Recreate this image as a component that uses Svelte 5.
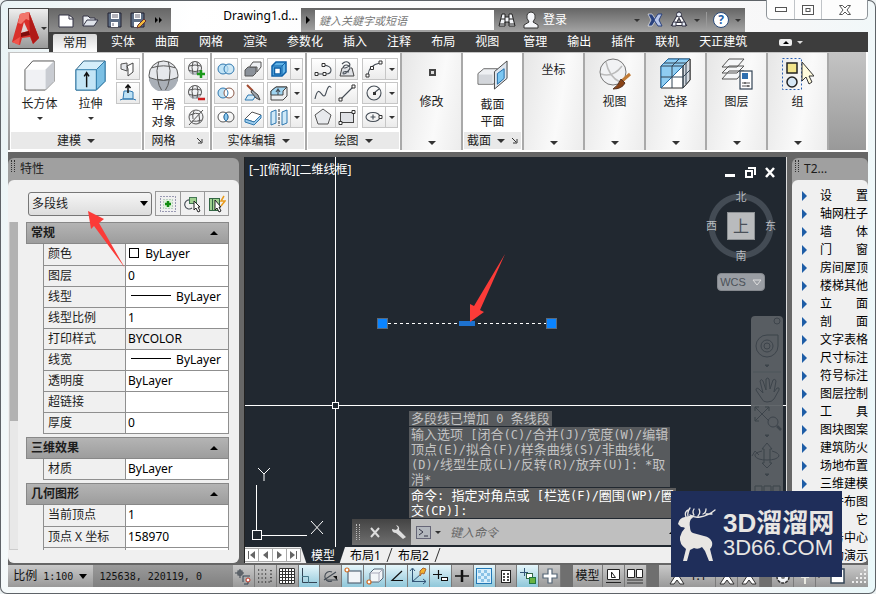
<script lang="ts">
  interface Property {
    label: string;
    value: string;
    kind?: "color" | "line" | "readonly";
  }

  interface PropertyGroup {
    title: string;
    rows: Property[];
  }

  const tabs = ["常用", "实体", "曲面", "网格", "渲染", "参数化", "插入", "注释", "布局", "视图", "管理", "输出", "插件", "联机", "天正建筑"];

  const groups: PropertyGroup[] = [
    {
      title: "常规",
      rows: [
        { label: "颜色", value: "ByLayer", kind: "color" },
        { label: "图层", value: "0" },
        { label: "线型", value: "ByLayer", kind: "line" },
        { label: "线型比例", value: "1" },
        { label: "打印样式", value: "BYCOLOR", kind: "readonly" },
        { label: "线宽", value: "ByLayer", kind: "line" },
        { label: "透明度", value: "ByLayer" },
        { label: "超链接", value: "" },
        { label: "厚度", value: "0" },
      ],
    },
    { title: "三维效果", rows: [{ label: "材质", value: "ByLayer" }] },
    {
      title: "几何图形",
      rows: [
        { label: "当前顶点", value: "1" },
        { label: "顶点 X 坐标", value: "158970" },
        { label: "", value: "" },
      ],
    },
  ];

  const archMenu = [
    "设置", "轴网柱子", "墙体", "门窗", "房间屋顶", "楼梯其他", "立面", "剖面", "文字表格", "尺寸标注", "符号标注",
    "图层控制", "工具", "图块图案", "建筑防火", "场地布置", "三维建模", "文件布图", "其它", "服务中心", "帮助演示",
  ];

  const history = [
    ["多段线已增加 0 条线段"],
    ["输入选项 [闭合(C)/合并(J)/宽度(W)/编辑", "顶点(E)/拟合(F)/样条曲线(S)/非曲线化", "(D)/线型生成(L)/反转(R)/放弃(U)]: *取", "消*"],
    ["命令: 指定对角点或 [栏选(F)/圈围(WP)/圈", "交(CP)]:"],
  ];

  const solidEdit = [
    ["union", "extrudeFace", "shell"],
    ["subtract", "sliceTool", "splitFace"],
    ["intersect", "thicken", "mirror"],
  ];

  const draw = [
    ["pline", "sketch", "arc"],
    ["spline", "line", "circle"],
    ["polygon", "rect", "ellipse"],
  ];

  const statusToggles = [
    { icon: "infer", label: "推断约束", on: false },
    { icon: "snap", label: "捕捉模式", on: false },
    { icon: "grid", label: "栅格显示", on: false },
    { icon: "ortho", label: "正交模式", on: true },
    { icon: "polar", label: "极轴追踪", on: false },
    { icon: "osnap", label: "对象捕捉", on: true },
    { icon: "osnap3d", label: "三维对象捕捉", on: true },
    { icon: "otrack", label: "对象捕捉追踪", on: true },
    { icon: "ducs", label: "动态 UCS", on: true },
    { icon: "dyn", label: "动态输入", on: true },
    { icon: "lwt", label: "线宽", on: false },
    { icon: "tpy", label: "透明度", on: true },
    { icon: "qp", label: "快捷特性", on: false },
    { icon: "cycle", label: "选择循环", on: true },
    { icon: "monitor", label: "注释监视器", on: false },
  ];

  const ink = 'fill="none" stroke="#444c55" stroke-width="1.1"';
  const blue = 'stroke="#2f78b0"';
  const meshBall = `<circle cx="8" cy="8" r="6.500" fill="#f1f2f4" stroke="#555"/><path d="M2 11q6 2 12 0-2 4-6 4t-6-4z" fill="#b9bec5"/><path d="M2 6q6-2 12 0M2 10.500q6 2 12 0M6 2q-2 5 0 12M10 2q2 5 0 12" fill="none" stroke="#555"/>`;

  // small icons share an 18 x 18 box
  const icons: Record<string, string> = {
    planar: `<path d="M2 4l6-1v8l-6-2z" fill="#e4e6ea" stroke="#555"/><path d="M8 6l6-3v9l-5 4V9z" fill="#fff" stroke="#444"/>`,
    presspull: `<path d="M5 7h6l3 1v7H4z" fill="#bfe2f5" ${blue}/><path d="M1 16l3-1h10l3 1" ${blue} fill="none"/><path d="M9 9V2M6.500 4L9 1l2.500 3" fill="none" stroke="#111" stroke-width="1.500"/>`,
    meshMore: `${meshBall}<path d="M10 14h8M14 10v8" stroke="#1b9a1b" stroke-width="2.500"/>`,
    meshLess: `${meshBall}<path d="M11 15h7" stroke="#cc1f1f" stroke-width="2.500"/>`,
    meshCrease: `<circle cx="9" cy="9" r="7" fill="#f1f2f4" stroke="#555"/><path d="M2 17L16 2M3 7q6-3 10-1M7 3q-2 4-1 8M5 13q4 1 10-1M12 7q1 4 0 8" fill="none" stroke="#555"/>`,
    union: `<circle cx="6" cy="9" r="5" fill="#bfe2f5" ${blue}/><circle cx="12" cy="9" r="5" fill="#bfe2f5" fill-opacity=".7" ${blue}/>`,
    subtract: `<circle cx="6" cy="9" r="5" fill="#bfe2f5" ${blue}/><circle cx="12" cy="9" r="5" fill="#fff" stroke="#8a5a4a"/><path d="M9 5a5 5 0 0 1 0 8" fill="none" ${blue}/>`,
    intersect: `<circle cx="6" cy="9" r="5" fill="#fff" stroke="#555"/><circle cx="12" cy="9" r="5" fill="none" stroke="#555"/><path d="M9 5a5 5 0 0 1 0 8a5 5 0 0 1 0-8" fill="#8ccaf0" ${blue}/>`,
    extrudeFace: `<path d="M1 10l3-3h8v6l-3 3H1z" fill="#8b9199" stroke="#555"/><path d="M6 6l3-4h8v5l-4 5V7H6z" fill="#eef0f3" stroke="#555"/>`,
    sliceTool: `<path d="M4 11h8l-3 5H1z" fill="#cfe9f8" ${blue}/><path d="M3 1l6 6" stroke="#a0492f" stroke-width="2"/><path d="M8 6l6 5 2 5-4-2-5-6z" fill="#9aa3ac" stroke="#444"/>`,
    thicken: `<path d="M1 11l7-7 9 3-7 7z" fill="#fff" stroke="#555"/><path d="M1 11v3l9 3 7-7V7l-7 7z" fill="#9dcbea" ${blue}/>`,
    shell: `<path d="M2 6l4-4h10v10l-4 4H2z" fill="#5fb2e6" stroke="#0d5fa6" stroke-width="1.500"/><rect x="4.500" y="8" width="6" height="6" fill="#fff" stroke="#0d5fa6" stroke-width="1.500"/><path d="M2 6h10v10M12 6l4-4" fill="none" stroke="#0d5fa6"/>`,
    splitFace: `<path d="M1 7l5-4h11v9l-4 4H1z" fill="#eceef1" stroke="#444"/><path d="M1 7l5-4h11l-4 4v4H1z" fill="#9fd4f1" stroke="#444"/><path d="M8 11V6M6 8l2-3 2 3" ${ink}/>`,
    mirror: `<path d="M1 4l5-2v13l-5 2zM12 4l5-2v13l-5 2z" fill="#cfe9f8" ${blue}/><path d="M9 1v17" stroke="#333" stroke-dasharray="3 1"/>`,
    pline: `<path d="M2 14h10q5 0 5-4t-7-5" ${ink}/><path d="M1 12.500h3v3H1zM9 12.500h3v3H9zM8 3.500h3v3H8z" fill="#fff" stroke="#333"/>`,
    sketch: `<path d="M5 8H4L2 16h14L14 8h-1" fill="#dfe1e5" stroke="#444"/><path d="M4 4q4-4 7-1t-4 5q-3 0-1-2t5 0-3 7q-3 2-3 0t6-1" ${ink}/>`,
    arc: `<path d="M3 15Q4 5 15 3" ${ink}/><path d="M1 14h3v3H1zM5.500 6.500h3v3h-3zM14 1h3v3h-3z" fill="#fff" stroke="#333"/>`,
    spline: `<path d="M1 15C5-4 9 20 12 9S17 4 17 3" ${ink}/>`,
    line: `<path d="M3 15L15 3" ${ink}/><path d="M1 14h3v3H1zM14 1h3v3h-3z" fill="#fff" stroke="#333"/>`,
    circle: `<circle cx="9" cy="9" r="7" ${ink}/><path d="M9 9l5-4" ${ink}/><path d="M8 8h3v3H8z" fill="#333"/>`,
    polygon: `<path d="M9 1l8 6-3 9H4L1 7z" fill="#e8eaed" stroke="#555"/>`,
    rect: `<rect x="2.500" y="4.500" width="13" height="10" fill="#dfe1e5" stroke="#444"/><path d="M1 13.500h3v3H1zM14 2.500h3v3h-3z" fill="#fff" stroke="#333"/>`,
    ellipse: `<ellipse cx="8" cy="9" rx="7" ry="4.500" ${ink}/><path d="M5.500 9h5M8 6.500v5" ${ink}/><path d="M14 7.500h3v3h-3z" fill="#fff" stroke="#333"/>`,
    newFile: `<path d="M2 4h10l4 3v9H2z" fill="#fff" stroke="#334"/><path d="M12 4v4h4" fill="none" stroke="#334"/>`,
    open: `<path d="M2 15V5h5l2 2h5v3" fill="#eceff3" stroke="#334"/><path d="M2 15l4-6h11l-4 6z" fill="#dfe3ea" stroke="#334"/>`,
    save: `<path d="M3 2h13v14H3z" fill="#5d6d84" stroke="#223"/><path d="M6 2h8v6H6zM6 11h7v5H6z" fill="#fff"/><path d="M7 4h6M7 6h6M8 12v3" stroke="#667"/>`,
    saveAs: `<path d="M2 2h13v14H2z" fill="#5d6d84" stroke="#223"/><path d="M5 2h7v6H5zM5 11h6v5H5z" fill="#fff"/><path d="M6 4h5M6 6h5" stroke="#667"/><path d="M8 17l1-3 6-6 2 2-6 6z" fill="#f2b93b" stroke="#633"/>`,
    binoculars: `<path d="M4 3h3v3h4V3h3l3 12h-6v-4H7v4H1z" fill="#f3f5f8" stroke="#222"/><path d="M3 8h4M11 8h4M7 6v6M11 6v6M1 13h6M11 13h6" stroke="#222"/>`,
    user: `<path d="M7 11Q4 7 5 4q1-3 4-3t4 3q1 3-2 7l5 3v3H2v-3z" fill="#f5f7fa" stroke="#333"/>`,
    exchange: `<path d="M2 3h4l4 6-4 6H2l3-6z" fill="#29417e" stroke="#fff" stroke-width=".6"/><path d="M16 3h-4L8 9l4 6h4l-3-6z" fill="#b9c7ea" stroke="#29417e"/>`,
    a360: `<path d="M9 4l5 9H4z" fill="none" stroke="#334" stroke-width="4"/><path d="M9 4l5 9H4z" fill="none" stroke="#fff" stroke-width="2"/><path d="M9 1a2 2 0 0 1 0 5a2 2 0 0 1 0-5M3 11h3v4H2zM12 11h3l1 4h-4z" fill="#e8eef8" stroke="#334"/>`,
    quickSelect: `<path d="M1.500 1.500h15v15h-15z" fill="none" stroke="#447" stroke-dasharray="1 2"/><path d="M4.500 4.500h9v9h-9z" fill="#dff3dd" stroke="#8a9" stroke-dasharray="1 2"/><path d="M6 9h6M9 6v6" stroke="#118c11" stroke-width="2.500"/>`,
    selectObj: `<path d="M6 5a4.500 4.500 0 1 0 2 8" ${ink}/><rect x="5.500" y="2.500" width="7" height="6" fill="#9fd08f" stroke="#475"/><path d="M10 6v9l2-2 2 4 2-1-2-4h2z" fill="#fff" stroke="#222"/>`,
    toggleAdd: `<rect x="1.500" y="3.500" width="10" height="12" fill="#9fd08f" stroke="#364"/><path d="M4.500 3v13" stroke="#364"/><path d="M7 5v10l2-2 2 4 2-1-2-4h2z" fill="#fff" stroke="#222"/><path d="M16 1l-3 5h4l-4 5" fill="none" stroke="#e89b1c" stroke-width="1.500"/>`,
    infer: `<path d="M1 6h9M6 2v9" ${ink}/><rect x="4" y="4" width="4" height="4" ${ink}/><path d="M9 15V9h7M14 13v4h-4" fill="none" stroke="#345"/><circle cx="14" cy="13" r="2" fill="#fff" stroke="#b32"/>`,
    snap: `<path d="M2 3h10M2 7h10M2 11h10M2 15h13M15 3v12" fill="none" stroke="#111" stroke-width="1.200" stroke-dasharray="1.200 2.300"/>`,
    grid: `<path d="M1 1h16v16H1z" fill="#fff"/><path d="M1.500 1.500h15v15h-15zM4.500 1v16M7.500 1v16M10.500 1v16M13.500 1v16M1 4.500h16M1 7.500h16M1 10.500h16M1 13.500h16" fill="none" stroke="#333"/>`,
    ortho: `<path d="M2.500 1v14.500H17" fill="none" stroke="#345"/><path d="M2 9.500h6.500V16" fill="none" stroke="#478"/>`,
    polar: `<path d="M2 13L14 5M4 13h12" ${ink}/><path d="M10 14a5 5 0 1 1 0-9" ${ink}/><path d="M11 9h4v4z" fill="#111"/>`,
    osnap: `<rect x="4" y="4" width="13" height="12" fill="#f2f5f8" stroke="#567" stroke-width="1.200"/><circle cx="3" cy="3" r="2" fill="#fff" stroke="#d2691e" stroke-width="1.200"/>`,
    osnap3d: `<path d="M4 6l4-4h9v9l-4 4H4z" fill="#f2f5f8" stroke="#567"/><path d="M4 6h9l4-4M13 6v9" fill="none" stroke="#aab"/><circle cx="3" cy="15" r="2" fill="#fff" stroke="#d2691e" stroke-width="1.200"/>`,
    otrack: `<path d="M14 4L4 13.500h11" fill="none" stroke="#111" stroke-width="1.200"/>`,
    ducs: `<path d="M3.500 2v12.500H17M3 15L12 7" fill="none" stroke="#357"/><path d="M1 4l2.500-3L6 4M14 12l3 2.500-3 2.500" fill="none" stroke="#357"/><path d="M11 4l3-3 3 1-2 5-2-1-2 3z" fill="#f4b22c" stroke="#a63"/>`,
    dyn: `<path d="M2 7.500h9M7.500 3v9" stroke="#111" stroke-width="1.200"/><rect x="10.500" y="10.500" width="6" height="3" fill="#fff" stroke="#111"/>`,
    lwt: `<path d="M2 9h14" stroke="#111" stroke-width="1.500"/><path d="M9 3v12" stroke="#111" stroke-width="2.500"/>`,
    tpy: `<rect x="1.500" y="1.500" width="15" height="15" fill="#d9effb" stroke="#2277b5"/><path d="M3 4.500h12M3 10.500h12" stroke="#8bc3e6" stroke-width="3" stroke-dasharray="3 3"/><path d="M6 7.500h9M6 13.500h9" stroke="#8bc3e6" stroke-width="3" stroke-dasharray="3 3"/>`,
    qp: `<rect x="4.500" y="3.500" width="9" height="12" fill="#fff" stroke="#222"/><path d="M6 7h2M10 7h2M6 10h2M10 10h2M6 13h2M10 13h2" stroke="#111" stroke-width="1.500"/>`,
    cycle: `<path d="M1 5.500h8M5.500 1v8" stroke="#357"/><rect x="7.500" y="6.500" width="6" height="5" fill="#fff" stroke="#364"/><rect x="10.500" y="10.500" width="6" height="6" fill="#69b341" stroke="#274"/>`,
    monitor: `<path d="M7 2h4v5h5v4h-5v5H7v-5H2V7h5z" fill="#fff" stroke="#567" stroke-width="1.200"/>`,
    layoutA: `<path d="M3.500 2.500h12v10h-12z" fill="#fff" stroke="#222"/><path d="M7.500 5v5.500h4z" fill="none" stroke="#222"/><path d="M2 15.500h15" stroke="#222"/>`,
    layoutB: `<path d="M1.500 2.500h7v8h-7zM10.500 2.500h6v8h-6z" fill="#fff" stroke="#222"/><path d="M1 13h16M1 16h16" stroke="#333"/>`,
    scaleA: `<path d="M2 17L9 6l7 11h-4l-3-4-3 4z" fill="#fff" stroke="#333"/>`,
    gear: `<circle cx="9" cy="10" r="6" fill="#f2f4f7" stroke="#333" stroke-width="1.500" stroke-dasharray="3 1"/><circle cx="9" cy="10" r="2" fill="#777"/>`,
    lock: `<path d="M6 2h6v8H6zM9 10v7" fill="#fff" stroke="#e8e8e0" stroke-width="2"/>`,
    clean: `<path d="M3 2h13v14H3z" fill="#fff" stroke="#345" stroke-width="1.500"/>`,
  };

  // half-width runs get the narrow monospace so that two latin cells fill one wide cell
  function runs(text: string) {
    return (text.match(/[\x00-\x7f]+|[^\x00-\x7f]+/g) ?? []).map((part) => ({
      part,
      latin: part.charCodeAt(0) < 128,
    }));
  }

  let activeTab = $state("常用");
  let selection = $state("多段线");
</script>

{#snippet icon(name: string)}
  <svg class="icon" width="18" height="18" viewBox="0 0 18 18" aria-hidden="true">{@html icons[name]}</svg>
{/snippet}

{#snippet caret()}
  <span class="caret"></span>
{/snippet}

{#snippet mixed(text: string)}
  <span class="mixed">{#each runs(text) as run}<span class:latin={run.latin}>{run.part}</span>{/each}</span>
{/snippet}

<div class="window">
  <header class="top">
    <button class="app-button" aria-label="应用程序菜单">
      <svg width="30" height="36" viewBox="0 0 30 36" aria-hidden="true">
        <path d="M9 3l9-2 10 26-6 6-3-7-8 1-2 7-8-3z" fill="#d9302b" />
        <path d="M9 3l9-2 4 10-7-3-5 5-3-1z" fill="#f2766c" />
        <path d="M18 1l10 26-6 6-3-9z" fill="#b01a18" />
        <path d="M13 11l4 9-7 2z" fill="#ded5d4" />
        <path d="M10 22l8-2 1 4-9 2z" fill="#7e0f0e" />
        <path d="M1 31l8-5-1 8z" fill="#f0554c" />
      </svg>
      {@render caret()}
    </button>

    <div class="title-row">
      <div class="quick-bar">
        {#each [["newFile", "新建"], ["open", "打开"], ["save", "保存"], ["saveAs", "另存为"]] as [name, label]}
          <button class="bare" aria-label={label}>{@render icon(name)}</button>
        {/each}
        <svg class="more" width="8" height="8" viewBox="0 0 8 8" aria-hidden="true"><path d="M0 1l3 3-3 3zM4 1l3 3-3 3z" /></svg>
      </div>
      <h1>Drawing1.d...</h1>
      <div class="info-bar">
        <button class="search-toggle" aria-label="展开搜索"><span class="right-caret"></span></button>
        <input class="search" type="text" placeholder="鍵入关鍵字或短语" aria-label="搜索" />
        <button class="bare find" aria-label="查找">{@render icon("binoculars")}</button>
        <button class="bare login">{@render icon("user")}登录</button>
        <span class="info-tools">
          {@render caret()}
          <button class="bare" aria-label="Exchange">{@render icon("exchange")}</button>
          <button class="bare" aria-label="Autodesk 360">{@render icon("a360")}</button>
          {@render caret()}
          <span class="rule"></span>
          <button class="help" aria-label="帮助">?</button>
          {@render caret()}
        </span>
      </div>
      <div class="window-buttons">
        <button aria-label="最小化"><svg width="12" height="6" viewBox="0 0 12 6"><rect x=".5" y=".5" width="11" height="4" fill="#fff" stroke="#555" /></svg></button>
        <button aria-label="还原"><svg width="12" height="10" viewBox="0 0 12 10"><rect x=".5" y=".5" width="11" height="9" fill="#fff" stroke="#555" /><rect x="4" y="3.500" width="4" height="3" fill="none" stroke="#555" /></svg></button>
        <button class="close" aria-label="关闭"><svg width="12" height="10" viewBox="0 0 12 10"><path d="M.5.5h3L6 3 8.500.5h3L8 5l3.500 4.500h-3L6 7 3.500 9.500h-3L4 5z" fill="#fff" stroke="#555" /></svg></button>
      </div>
    </div>

    <nav class="tabs" aria-label="功能区">
      {#each tabs as tab}
        <button class:active={tab === activeTab} class:gap-before={tab === "管理"} onclick={() => (activeTab = tab)}>{tab}</button>
      {/each}
      <button class="collapse" aria-label="最小化功能区"><span class="pill"><span class="up-caret"></span></span>{@render caret()}</button>
    </nav>
  </header>

  <section class="ribbon" aria-label="常用">
    <div class="panel modeling">
      <div class="tools">
        <button class="big">
          <svg width="32" height="32" viewBox="0 0 32 32" aria-hidden="true">
            <path d="M1 10L9 1h22v21l-9 9H1z" fill="#fff" stroke="#555" />
            <path d="M22 10l9-9v21l-9 9z" fill="#c9ccd2" />
            <path d="M2 10h20v20H2z" fill="#f0f1f4" />
          </svg>
          长方体{@render caret()}
        </button>
        <button class="big">
          <svg width="32" height="32" viewBox="0 0 32 32" aria-hidden="true">
            <path d="M1 10L9 1h22v21l-9 9H1z" fill="#d5eefa" stroke="#2c5f80" />
            <path d="M22 10l9-9v21l-9 9z" fill="#7cc0e4" stroke="#2c7aa8" />
            <path d="M1 10h21v21H1z" fill="#c3e5f6" stroke="#2c7aa8" />
            <path d="M12 28V14M9.500 17l2.500-4 2.500 4" fill="none" stroke="#111" stroke-width="1.500" />
          </svg>
          拉伸{@render caret()}
        </button>
        <div class="stack">
          <button class="tool" aria-label="平面曲面">{@render icon("planar")}</button>
          <button class="tool" aria-label="按住并拖动">{@render icon("presspull")}</button>
        </div>
      </div>
      <div class="panel-label">建模 {@render caret()}</div>
    </div>

    <div class="panel mesh">
      <div class="tools">
        <button class="big">
          <svg width="32" height="32" viewBox="0 0 32 32" aria-hidden="true">
            <circle cx="16" cy="16" r="15" fill="#e6e8ec" stroke="#555" />
            <path d="M1 18q15 6 30 0a15 15 0 0 1-30 0z" fill="#a9afb7" />
            <path d="M11 2q-3 9-1 18 6 2 12 0 2-9-1-18M4 8q12-4 24 0M1 18q15 6 30 0M10 20q1 7 4 11M22 20q-1 7-4 11" fill="none" stroke="#555" />
          </svg>
          <span class="two-line">平滑<br />对象</span>
        </button>
        <div class="stack">
          <button class="tool" aria-label="提高平滑度">{@render icon("meshMore")}</button>
          <button class="tool" aria-label="降低平滑度">{@render icon("meshLess")}</button>
          <button class="tool" aria-label="锐化">{@render icon("meshCrease")}</button>
        </div>
      </div>
      <div class="panel-label">网格<svg class="launcher" width="7" height="7" viewBox="0 0 7 7" aria-hidden="true"><path d="M1 1l4 4M6 2v4H2" fill="none" stroke="#333" /></svg></div>
    </div>

    <div class="panel edit">
      <div class="tools rows">
        {#each solidEdit as row}
          <div class="tool-row">
            {#each row as name, i}
              <button class="tool" aria-label={name}>{@render icon(name)}</button>
              {#if i === 2}<button class="drop" aria-label="更多">{@render caret()}</button>{/if}
            {/each}
          </div>
        {/each}
      </div>
      <div class="panel-label">实体编辑 {@render caret()}</div>
    </div>

    <div class="panel draw">
      <div class="tools rows">
        {#each draw as row}
          <div class="tool-row">
            {#each row as name, i}
              <button class="tool" aria-label={name}>{@render icon(name)}</button>
              {#if i === 2}<button class="drop" aria-label="更多">{@render caret()}</button>{/if}
            {/each}
          </div>
        {/each}
      </div>
      <div class="panel-label">绘图 {@render caret()}</div>
    </div>

    <button class="panel folded">
      <svg width="32" height="32" viewBox="0 0 32 32" aria-hidden="true"><rect x="14" y="12" width="5" height="5" fill="#ddd" stroke="#444" stroke-width="2" /></svg>
      <span>修改</span>{@render caret()}
    </button>

    <div class="panel section">
      <div class="tools">
        <button class="big">
          <svg width="32" height="32" viewBox="0 0 32 32" aria-hidden="true">
            <path d="M1 14l6-5h14v11l-4 5H1z" fill="#eef0f3" stroke="#666" />
            <path d="M2 15h14v9H2z" fill="#d3d6db" />
            <path d="M18 12L31 1v18L18 30z" fill="#dfe6ee" stroke="#444" />
            <path d="M21 14l7-5v10l-7 6z" fill="#7cc7f2" stroke="#1f6aa5" />
          </svg>
          <span class="two-line">截面<br />平面</span>
        </button>
      </div>
      <div class="panel-label">截面 {@render caret()}<svg class="launcher" width="7" height="7" viewBox="0 0 7 7" aria-hidden="true"><path d="M1 1l4 4M6 2v4H2" fill="none" stroke="#333" /></svg></div>
    </div>

    <button class="panel folded"><span>坐标</span>{@render caret()}</button>

    <button class="panel folded">
      <svg width="32" height="32" viewBox="0 0 32 32" aria-hidden="true">
        <circle cx="14" cy="14" r="13" fill="#f1f2f4" stroke="#777" />
        <path d="M2 16q12 4 21-8M7 4q3 15 14 20" fill="none" stroke="#bbb" stroke-width="1.500" />
        <path d="M31 16l-8 7" stroke="#c07a35" stroke-width="3" />
        <path d="M22 21l4 4q-3 6-12 6 5-3 8-10z" fill="#8a4316" stroke="#532" />
      </svg>
      <span>视图</span>{@render caret()}
    </button>

    <button class="panel folded">
      <svg width="32" height="32" viewBox="0 0 32 32" aria-hidden="true">
        <path d="M1 8l7-7h22v21l-7 8H1z" fill="#fff" stroke="#333" />
        <path d="M1 8l7-7h22l-7 7L1 30z" fill="#8fcdf2" stroke="#1f6aa5" />
        <path d="M23 8l7-7v21l-7 8z" fill="#d5dae0" stroke="#333" />
        <path d="M1 8h22v22M12 8v22M1 19h22l7-7M12 8l7-7M4 5h22v21" fill="none" stroke="#345" />
      </svg>
      <span>选择</span>{@render caret()}
    </button>

    <button class="panel folded">
      <svg width="32" height="32" viewBox="0 0 32 32" aria-hidden="true">
        <path d="M1 21l7-8h15l-7 8zM1 15l7-7h15l-7 7zM1 9l7-8h15l-7 8z" fill="#f5f6f8" stroke="#555" />
        <rect x="19" y="13" width="12" height="18" fill="#fff" stroke="#345" stroke-width="1.200" />
        <rect x="21" y="15" width="6" height="6" fill="#2f6fb0" />
        <path d="M21 25h8M21 28h8" stroke="#555" /><path d="M24 24v2M27 27v2" stroke="#333" />
      </svg>
      <span>图层</span>{@render caret()}
    </button>

    <button class="panel folded">
      <svg width="32" height="32" viewBox="0 0 32 32" aria-hidden="true">
        <path d="M.5.5h19v31H.5z" fill="none" stroke="#2b5fb0" stroke-dasharray="2 2" />
        <rect x="5" y="5" width="10" height="10" fill="#f3e58c" stroke="#222" stroke-width="1.500" />
        <circle cx="10" cy="24" r="5" fill="#d5e6f5" stroke="#222" stroke-width="1.500" />
        <path d="M20 4v19l4-4 3 7 3-2-3-6h5z" fill="#fffbdc" stroke="#333" />
      </svg>
      <span>组</span>{@render caret()}
    </button>
  </section>

  <main class="work">
    <aside class="properties" aria-label="特性">
      <h2><span class="grip"></span>特性</h2>
      <div class="properties-body">
        <div class="selector">
          <div class="select-box">
            <select bind:value={selection} aria-label="对象类型">
              <option>多段线</option>
            </select>
            <span class="caret large"></span>
          </div>
          <div class="selector-tools">
            <button aria-label="切换 PICKADD">{@render icon("quickSelect")}</button>
            <button aria-label="选择对象">{@render icon("selectObj")}</button>
            <button aria-label="快速选择">{@render icon("toggleAdd")}</button>
          </div>
        </div>
        <div class="scroll-area">
          <div class="scrollbar"><div class="thumb"></div></div>
          <div class="groups">
            {#each groups as group}
              <section>
                <button class="group-head">{group.title}<span class="up-caret"></span></button>
                <table>
                  <tbody>
                    {#each group.rows as row}
                      <tr>
                        <th scope="row">{row.label}</th>
                        <td class:readonly={row.kind === "readonly"}>
                          {#if row.kind === "color"}<span class="swatch"></span>{/if}
                          {#if row.kind === "line"}<span class="sample"></span>{/if}
                          {row.value}
                        </td>
                      </tr>
                    {/each}
                  </tbody>
                </table>
              </section>
            {/each}
          </div>
        </div>
      </div>
      <svg class="pointer" width="38" height="58" viewBox="0 0 38 58" aria-hidden="true"><path d="M0 0l16 8-5 4 26 45L6 15l-3 3z" fill="#fb3b38" /></svg>
    </aside>

    <section class="drawing" aria-label="绘图区">
      <div class="canvas">
        <svg class="scene" width="100%" height="100%" aria-hidden="true">
          <g stroke="#fff" fill="none" shape-rendering="crispEdges">
            <path d="M11.500 328v45M16 378.500h46M7.500 373.500h9v9h-9z" />
            <line x1="0" y1="248.500" x2="100%" y2="248.500" />
            <line x1="90.500" y1="0" x2="90.500" y2="100%" />
            <rect x="87.500" y="245.500" width="6" height="6" fill="#212830" />
            <path d="M143 166.500h158" stroke-dasharray="3 3" />
          </g>
          <path d="M13 311l6 6 6-6M19 317v7M66 364l12 13M78 364l-12 13" fill="none" stroke="#fff" />
          <g fill="#0a84ff" stroke="#5a6a7c">
            <rect x="132.500" y="161.500" width="10" height="10" />
            <rect x="301.500" y="161.500" width="10" height="10" />
          </g>
          <rect x="214" y="164" width="16" height="5" fill="#1d72cf" />
          <path d="M225 165v-18l4 2 31-52-25 56 4 2z" fill="#fb3b38" />
        </svg>

        <p class="view-label">[−][俯视][二维线框]</p>

        <div class="mdi">
          <button aria-label="最小化视口"><svg width="11" height="11" viewBox="0 0 11 11"><path d="M0 7h10v3H0z" fill="#fff" /></svg></button>
          <button aria-label="还原视口"><svg width="11" height="11" viewBox="0 0 11 11"><path d="M3 1h7v7M1 4h6v6H1z" fill="none" stroke="#fff" stroke-width="2" /></svg></button>
          <button aria-label="关闭视口"><svg width="11" height="11" viewBox="0 0 11 11"><path d="M1 1l8 9M9 1l-8 9" stroke="#fff" stroke-width="2.500" /></svg></button>
        </div>

        <div class="compass">
          <span class="north">北</span>
          <span class="west">西</span>
          <button class="cube">上</button>
          <span class="east">东</span>
          <span class="south">南</span>
        </div>
        <button class="wcs">WCS <svg width="10" height="7" viewBox="0 0 10 7" aria-hidden="true"><path d="M1 1h8L5 6z" fill="none" stroke="#ddd" /></svg></button>

        <div class="nav-bar">
          <svg width="32" height="180" viewBox="0 0 32 180" fill="none" stroke="#3f464d" aria-hidden="true">
            <circle cx="26" cy="5" r="3" />
            <path d="M16 19h11v11a11 11 0 1 1-11-11z" /><circle cx="16" cy="30" r="6" /><circle cx="16" cy="30" r="3" />
            <path d="M14 49h4l-2 2z" fill="#3f464d" />
            <path d="M2 56h28" stroke="#50585f" />
            <path d="M11 83l-6-9q0-3 3-1l4 4-3-12q1-3 3 0l3 9V63q2-2 3 0l1 10 3-9q2-2 3 1l-2 11 3-4q3-1 2 2l-5 9q-2 3-7 3-4 0-5-3z" />
            <path d="M4 91l14 14M18 91L4 105M4 95v-4h4M14 91h4v4M4 101v4h4" /><circle cx="22" cy="106" r="5" /><path d="M26 110l4 4" stroke-width="2.500" />
            <path d="M14 119h4l-2 2z" fill="#3f464d" />
            <path d="M13 147v-14h-2l5-6 5 6h-2v14h2l-5 5-5-5zM11 135q-8 2-7 5 2 4 12 4t12-4q0-3-7-5M8 139l-4-4-3 5" />
            <path d="M14 158h4l-2 2z" fill="#3f464d" />
            <path d="M4 170h7v8H4zM13 170h7v8h-7zM22 170h7v8h-7z" />
          </svg>
        </div>

        <div class="command">
          {#each history as block, i}
            <div class="history" class:current={i === 2}>
              {#each block as line}<div>{@render mixed(line)}</div>{/each}
            </div>
          {/each}
          <div class="command-line">
            <div class="command-tools">
              <span class="grip tall"></span>
              <button class="bare" aria-label="关闭"><svg width="11" height="11" viewBox="0 0 11 11"><path d="M1 1l8 9M9 1l-8 9" stroke="#ddd" stroke-width="2" /></svg></button>
              <button class="bare" aria-label="自定义"><svg width="16" height="16" viewBox="0 0 16 16"><path d="M5 1l2 3-2 2-4-1q0 4 4 4l7 6 3-2-7-7q1-4-3-5z" fill="#ddd" /></svg></button>
            </div>
            <svg class="prompt" width="15" height="13" viewBox="0 0 15 13" aria-hidden="true"><rect x=".5" y=".5" width="14" height="12" fill="#b4b8be" stroke="#667" /><path d="M3 3l4 3-4 3M8 10h4" fill="none" stroke="#334" /></svg>
            {@render caret()}
            <input type="text" placeholder="键入命令" aria-label="命令行" />
            <span class="up-caret"></span>
          </div>
        </div>
      </div>

      <div class="layouts">
        <div class="layout-nav">
          <button aria-label="第一个"><svg width="9" height="10" viewBox="0 0 9 10"><path d="M1.500 1v8" stroke="#666" /><path d="M3 5l5-4v8z" fill="#666" /></svg></button>
          <button aria-label="上一个"><svg width="9" height="10" viewBox="0 0 9 10"><path d="M2 5l5-4v8z" fill="#666" /></svg></button>
          <button aria-label="下一个"><svg width="9" height="10" viewBox="0 0 9 10"><path d="M7 5L2 1v8z" fill="#666" /></svg></button>
          <button aria-label="最后一个"><svg width="9" height="10" viewBox="0 0 9 10"><path d="M7.500 1v8" stroke="#666" /><path d="M6 5L1 1v8z" fill="#666" /></svg></button>
        </div>
        <button class="layout model">模型</button>
        <button class="layout">布局1</button>
        <svg width="7" height="14" viewBox="0 0 7 14" aria-hidden="true"><path d="M1 14L6 0" stroke="#333" /></svg>
        <button class="layout">布局2</button>
        <svg width="7" height="14" viewBox="0 0 7 14" aria-hidden="true"><path d="M1 14L6 0" stroke="#333" /></svg>
      </div>
    </section>

    <aside class="arch" aria-label="天正菜单">
      <h2><span class="grip"></span>T2...</h2>
      <ul>
        {#each archMenu as item}
          <li>
            <button>
              <span class="blue-caret"></span>
              <span class="spread">{#each item as char}<span>{char}</span>{/each}</span>
            </button>
          </li>
        {/each}
      </ul>
    </aside>
  </main>

  <footer class="status">
    <button class="scale">{@render mixed("比例 1:100")}<span class="caret large"></span></button>
    <output class="coords">{@render mixed("125638, 220119, 0")}</output>
    {#each statusToggles as toggle}
      <button class="toggle" class:on={toggle.on} aria-pressed={toggle.on} aria-label={toggle.label}>{@render icon(toggle.icon)}</button>
    {/each}
    <span class="filler"></span>
    <button class="space">模型</button>
    <button class="toggle" aria-label="快速查看布局">{@render icon("layoutA")}</button>
    <button class="toggle" aria-label="快速查看图形">{@render icon("layoutB")}</button>
    <span class="filler"></span>
    <button class="annotation">{@render icon("scaleA")}1:1</button>
    <button class="toggle" aria-label="注释可见性">{@render icon("scaleA")}</button>
    <button class="toggle" aria-label="自动缩放">{@render icon("scaleA")}</button>
    <span class="filler"></span>
    <button class="toggle" aria-label="切换工作空间">{@render icon("gear")}</button>
    <button class="toggle" aria-label="锁定">{@render icon("lock")}</button>
    <span class="status-end">
      {@render caret()}
      <button class="toggle" aria-label="全屏显示">{@render icon("clean")}</button>
      <svg width="16" height="14" viewBox="0 0 16 14" aria-hidden="true"><path d="M12 0h2v2h-2zM8 4h2v2H8zM12 4h2v2h-2zM4 8h2v2H4zM8 8h2v2H8zM12 8h2v2h-2zM0 12h2v2H0zM4 12h2v2H4zM8 12h2v2H8zM12 12h2v2h-2z" fill="#eee" /></svg>
    </span>
  </footer>

  <div class="watermark">
    <svg width="42" height="56" viewBox="0 0 42 56" aria-hidden="true">
      <path d="M2 18q1-6 7-7l4-1 5-1q-1 3-3 4-2 3-1 8 0 5 3 6l11 3q6 1 8 6 1 4-2 7l3 12h-4l-4-10-3-4q-4 3-8 1l-4 2-3 11H7l3-12q-7-5-6-12 1-5 5-9-1-1-4-1z" fill="#e8e6e3" />
      <path d="M10 11Q8 6 12 4M12 10q-1-4 2-8M14 9q4 3 10 2 8-1 15-7M18 9q-2-3 0-6M22 10q3-3 1-7M27 8q3-1 3-5M30 8l6 0" fill="none" stroke="#e8e6e3" stroke-width="1.300" stroke-linecap="round" />
    </svg>
    <div>
      <strong>3D溜溜网</strong>
      <span>3D66.COM</span>
    </div>
  </div>
</div>

<style>
  :global(body) {
    margin: 0;
    background: #eef3f4;
  }

  .window {
    position: relative;
    box-sizing: border-box;
    display: flex;
    flex-direction: column;
    height: 100vh;
    padding: 0 8px 7px;
    border-radius: 7px;
    box-shadow: inset 0 0 0 1px #5e6368;
    background: linear-gradient(100deg, #e9f3f5, #fff 20%, #f7f7f8 80%, #eaf8fa);
    color: #1c1c1c;
    font: 12px/16px "Noto Sans", "Noto Sans CJK SC", sans-serif;
    overflow: hidden;
  }

  button,
  input,
  select {
    margin: 0;
    padding: 0;
    border: 0;
    border-radius: 0;
    background: none;
    color: inherit;
    font: inherit;
  }

  button {
    display: flex;
    align-items: center;
    justify-content: center;
    white-space: nowrap;
  }

  svg {
    display: block;
    flex: none;
  }

  h1,
  h2,
  p,
  ul {
    margin: 0;
    padding: 0;
    font: inherit;
    list-style: none;
  }

  .caret,
  .up-caret,
  .right-caret,
  .blue-caret {
    display: inline-block;
    flex: none;
    border: 2px solid transparent;
  }

  .caret {
    border-width: 3px 3px 0;
    border-top-color: #333;
  }

  .caret.large {
    border-width: 5px 4px 0;
    border-top-color: #000;
  }

  .up-caret {
    border-width: 0 4px 4px;
    border-bottom-color: #000;
  }

  .right-caret {
    border-width: 4px 0 4px 4px;
    border-left-color: #000;
  }

  .mixed {
    display: block;
    white-space: pre;
  }

  .latin {
    font-family: "DejaVu Sans Mono", monospace;
    font-size: 10px;
    line-height: 1;
  }

  .top {
    flex: none;
    display: grid;
    grid-template: 32px 20px / 41px 1fr;
  }

  .app-button {
    grid-row: 1 / 3;
    align-self: end;
    height: 41px;
    margin-bottom: 3px;
    border: 1px solid #444;
    background: linear-gradient(#eee, #999);
  }

  .title-row {
    display: flex;
    align-items: flex-end;
    min-width: 0;
  }

  .quick-bar {
    display: flex;
    align-items: center;
    box-sizing: border-box;
    width: 122px;
    height: 24px;
    padding-left: 8px;
    gap: 6px;
    background: linear-gradient(#666, #8d8d8d);
  }

  .more {
    margin-left: 2px;
  }

  h1 {
    box-sizing: border-box;
    flex: none;
    width: 130px;
    height: 24px;
    padding-right: 3px;
    color: #000;
    text-align: right;
  }

  .info-bar {
    display: flex;
    align-items: center;
    flex: 1;
    height: 24px;
    background: linear-gradient(#656565, #a4a4a4);
  }

  .search-toggle {
    width: 14px;
    height: 22px;
  }

  .search {
    box-sizing: border-box;
    flex: 0 1 179px;
    width: 179px;
    height: 20px;
    padding: 0 4px;
    background: #fff;
    font-size: 11px;
  }

  .search::placeholder {
    color: #777;
    font-style: italic;
    opacity: 1;
  }

  .find {
    margin: 0 6px 0 4px;
  }

  .login {
    gap: 3px;
    color: #fff;
  }

  .info-tools {
    display: flex;
    align-items: center;
    gap: 6px;
    margin-left: auto;
    padding-right: 4px;
  }

  .rule {
    width: 1px;
    height: 16px;
    background: #999;
  }

  .help {
    width: 16px;
    height: 16px;
    border: 1px solid #2a4a7a;
    border-radius: 50%;
    background: #fff;
    color: #1f5fa8;
    font-weight: bold;
  }

  .window-buttons {
    display: flex;
    align-self: flex-start;
    height: 19px;
    margin-left: 21px;
    border: 1px solid #8e9499;
    border-top: 0;
    border-radius: 0 0 5px 5px;
    background: #fdfdfd;
  }

  .window-buttons button {
    width: 27px;
  }

  .window-buttons button + button {
    border-left: 1px solid #c0c4c8;
  }

  .window-buttons .close {
    width: 46px;
  }

  .tabs {
    display: flex;
    padding-left: 4px;
    background: #3d3d3d;
    color: #fff;
  }

  .tabs button {
    padding: 0 10px;
  }

  .tabs .active {
    margin: 2px 4px 0 0;
    border-radius: 2px 2px 0 0;
    background: linear-gradient(#d8d8d8, #fff);
    color: #222;
  }

  .tabs .gap-before {
    margin-left: 4px;
  }

  .tabs .collapse {
    margin-left: 12px;
    gap: 5px;
  }

  .collapse .caret {
    border-top-color: #ddd;
  }

  .pill {
    display: flex;
    align-items: center;
    justify-content: center;
    width: 13px;
    height: 7px;
    border-radius: 2px;
    background: #eee;
  }

  .pill .up-caret {
    border-width: 0 3px 3px;
  }

  .ribbon {
    display: flex;
    flex: none;
    height: 97px;
    padding: 1px 0 0 2px;
    border: solid #fff;
    border-width: 0 2px 2px 0;
    background: linear-gradient(#c4c4c4, #999);
  }

  .panel {
    display: flex;
    flex-direction: column;
    flex: none;
    box-sizing: border-box;
    width: 61px;
    border-right: 2px solid #a9a9a9;
    background: #fff;
  }

  .modeling {
    width: 134px;
  }

  .mesh {
    width: 68px;
  }

  .edit,
  .draw {
    width: 95px;
  }

  .tools {
    display: flex;
    flex: 1;
    justify-content: space-between;
    padding: 5px 2px 0;
  }

  .modeling .tools {
    padding-left: 4px;
  }

  .panel-label {
    display: flex;
    align-items: center;
    justify-content: center;
    gap: 6px;
    height: 17px;
    margin: 0 1px 1px;
    background: #e9e9e9;
  }

  .panel-label .caret,
  .folded > .caret {
    border-width: 4px 4px 0;
  }

  .mesh .launcher {
    margin-left: 14px;
  }

  .big {
    flex-direction: column;
    justify-content: flex-start;
    flex: 1;
    padding-top: 2px;
    gap: 5px;
  }

  .big svg {
    width: 31px;
    height: 31px;
  }

  .mesh .big {
    flex: none;
    padding-left: 2px;
  }

  .two-line {
    line-height: 17px;
  }

  .stack,
  .rows {
    display: flex;
    flex-direction: column;
    justify-content: flex-start;
    gap: 2px;
  }

  .tool,
  .drop {
    box-sizing: border-box;
    width: 24px;
    height: 22px;
    border: 1px solid #c6c6c6;
    background: linear-gradient(#fff, #ebebeb);
  }

  .drop {
    width: 12px;
    border-left: 0;
  }

  .tool-row {
    display: flex;
  }

  .edit .tool-row .tool:not(:first-child) {
    margin-left: 3px;
  }

  .draw .tools {
    padding-left: 4px;
  }

  .draw .tool:first-child {
    border-right: 0;
  }

  .draw .tool:nth-child(3) {
    margin-left: 4px;
  }

  .folded {
    align-items: center;
    justify-content: flex-start;
    padding: 5px 0 5px;
    background: linear-gradient(100deg, #e6e6e6, #fafafa 60%, #ececec);
  }

  .folded > span:not(.caret) {
    margin-top: 4px;
  }

  .folded > .caret {
    margin-top: auto;
  }

  .work {
    display: flex;
    flex: 1;
    gap: 5px;
    min-height: 0;
    padding: 5px 0 2px;
    background: #666;
  }

  .properties,
  .arch {
    position: relative;
    display: flex;
    flex-direction: column;
    flex: none;
    margin-top: 1px;
    border-radius: 6px;
    background: #a0a0a0;
  }

  .properties {
    width: 231px;
  }

  h2 {
    display: flex;
    align-items: center;
    flex: none;
    gap: 5px;
    height: 22px;
    padding-left: 3px;
  }

  .grip {
    width: 2px;
    height: 12px;
    margin-bottom: 6px;
    border: dotted #333;
    border-width: 0 1px;
  }

  .properties-body {
    display: flex;
    flex-direction: column;
    flex: 1;
    gap: 6px;
    min-height: 0;
    padding: 11px 10px 13px 0;
    border-radius: 6px;
    background: #f0f0f0;
  }

  .selector {
    display: flex;
    align-items: center;
    gap: 3px;
    padding-left: 20px;
  }

  .select-box {
    display: flex;
    align-items: center;
    flex: 1;
    height: 22px;
    padding: 0 3px;
    border: 1px solid #777;
    border-radius: 3px;
    background: linear-gradient(#f5f5f5, #ddd);
  }

  select {
    flex: 1;
    appearance: none;
  }

  .selector-tools {
    display: flex;
    border: 1px solid #999;
  }

  .selector-tools button {
    width: 24px;
    height: 23px;
  }

  .selector-tools button + button {
    border-left: 1px solid #999;
  }

  .scroll-area {
    display: flex;
    flex: 1;
    gap: 8px;
    min-height: 0;
    overflow: hidden;
  }

  .scrollbar {
    width: 8px;
    margin-left: 1px;
    border: 1px solid #ccc;
    border-width: 0 0 1px 1px;
    background: #e8e8e8;
  }

  .thumb {
    height: 61%;
    background: #b2b2b2;
  }

  .groups {
    flex: 1;
    display: flex;
    flex-direction: column;
    gap: 3px;
  }

  .group-head {
    box-sizing: border-box;
    justify-content: space-between;
    width: 100%;
    height: 22px;
    padding: 0 10px 0 4px;
    border: 1px solid #888;
    background: linear-gradient(#b4b4b4, #9d9d9d);
    font-weight: bold;
  }

  table {
    width: calc(100% - 17px);
    margin-left: 17px;
    border-collapse: collapse;
    table-layout: fixed;
  }

  th,
  td {
    box-sizing: border-box;
    height: 21px;
    padding: 0 0 0 4px;
    border: 1px solid #8f8f8f;
    border-top: 0;
    line-height: 18px;
    font-weight: normal;
    text-align: left;
    white-space: nowrap;
  }

  th {
    width: 82px;
  }

  td {
    padding-left: 2px;
    background: #fff;
    color: #000;
  }

  td.readonly {
    background: #f0f0f0;
  }

  .swatch {
    display: inline-block;
    width: 8px;
    height: 8px;
    margin: 0 3px 0 1px;
    border: 1px solid #000;
  }

  .sample {
    display: inline-block;
    width: 40px;
    height: 1px;
    margin: 0 2px 4px 3px;
    background: #000;
    vertical-align: middle;
  }

  .pointer {
    position: absolute;
    top: 53px;
    left: 80px;
  }

  .drawing {
    display: flex;
    flex-direction: column;
    flex: 1;
    min-width: 0;
    border-right: 1px solid #ddd;
    border-left: 1px solid #222;
  }

  .canvas {
    position: relative;
    flex: 1;
    min-height: 0;
    background: #212830;
    color: #fff;
    overflow: hidden;
  }

  .scene {
    position: absolute;
    inset: 0;
  }

  .view-label {
    position: absolute;
    top: 5px;
    left: 4px;
  }

  .mdi {
    position: absolute;
    top: 10px;
    right: 10px;
    display: flex;
    gap: 9px;
  }

  .compass {
    position: absolute;
    top: 31px;
    right: 7px;
    display: grid;
    grid-template: 17px 42px 17px / 17px 42px 17px;
    place-items: center;
    background: radial-gradient(circle, transparent 26px, #434b54 27px, #434b54 32px, transparent 33px);
    color: #b9bdc1;
    font-size: 11px;
  }

  .north {
    grid-area: 1 / 2;
  }

  .west {
    grid-area: 2 / 1;
  }

  .east {
    grid-area: 2 / 3;
  }

  .south {
    grid-area: 3 / 2;
  }

  .cube {
    grid-area: 2 / 2;
    width: 28px;
    height: 28px;
    border: 1px solid #8d9194;
    background: #b9bbbd;
    color: #4a5058;
    font-size: 16px;
  }

  .wcs {
    position: absolute;
    top: 116px;
    right: 21px;
    gap: 6px;
    width: 48px;
    height: 18px;
    border: 1px solid #85898e;
    border-radius: 4px;
    background: #9a9ea4;
    color: #4b5158;
    font: 11px/16px "Liberation Sans", sans-serif;
  }

  .nav-bar {
    position: absolute;
    top: 159px;
    right: 3px;
    bottom: 0;
    border-radius: 4px 4px 0 0;
    background: #5b6065;
    opacity: 0.95;
  }

  .command {
    position: absolute;
    right: 93px;
    bottom: 2px;
    left: 107px;
    font-size: 13px;
    line-height: 15px;
  }

  .history {
    width: fit-content;
    margin: 0 0 1px 57px;
    padding: 0 2px;
    background: #575a5d;
    color: #c3c3c3;
  }

  .history.current {
    background: #5c5c5c;
    color: #fff;
  }

  .history .mixed {
    height: 15px;
  }

  .history .latin {
    font-size: 12px;
  }

  .command-line {
    display: flex;
    align-items: center;
    height: 26px;
    border-radius: 3px 0 0 0;
    background: #bfbfbf;
    color: #666;
    font-size: 12px;
  }

  .command-line > .up-caret {
    margin-right: 16px;
  }

  .command-tools {
    display: flex;
    align-items: center;
    align-self: stretch;
    gap: 10px;
    padding: 0 4px;
    margin-right: 5px;
    background: linear-gradient(#444, #6f6f6f);
  }

  .grip.tall {
    height: 16px;
    margin: 0;
    border-color: #bbb;
  }

  .prompt {
    margin-right: 4px;
  }

  .command-line input {
    flex: 1;
    min-width: 0;
    margin-left: 9px;
  }

  .command-line input::placeholder {
    color: #666;
    font-style: italic;
    opacity: 1;
  }

  .layouts {
    display: flex;
    align-items: center;
    flex: none;
    height: 16px;
    background: #efefef;
    color: #000;
  }

  .layout-nav {
    display: flex;
    background: #fff;
  }

  .layout-nav button {
    box-sizing: border-box;
    width: 14px;
    height: 14px;
    border: 1px solid #aaa;
    border-left: 0;
  }

  .layout {
    height: 15px;
    padding: 0 5px;
    line-height: 15px;
  }

  .layout.model {
    height: 16px;
    padding: 0 10px;
    background: #212830;
    color: #fff;
    clip-path: polygon(0 0, 100% 0, 88% 100%, 12% 100%);
  }

  .arch {
    width: 76px;
    overflow: hidden;
  }

  .arch ul {
    flex: 1;
    min-height: 0;
    padding-top: 7px;
    border-radius: 6px;
    background: #f0f0f0;
    overflow: hidden;
  }

  .arch li button {
    width: 100%;
    height: 18px;
    padding-left: 10px;
    color: #000;
  }

  .blue-caret {
    border-width: 5px 0 5px 5px;
    border-left-color: #1e5da6;
  }

  .spread {
    display: flex;
    flex: 1;
    justify-content: space-between;
    margin-left: 13px;
  }

  .status {
    display: flex;
    flex: none;
    height: 22px;
    background: linear-gradient(#c9c9c9, #999);
    color: #111;
  }

  .scale {
    gap: 6px;
    width: 85px;
  }

  .coords {
    display: flex;
    align-items: center;
    box-sizing: border-box;
    width: 141px;
    padding-left: 7px;
    background: linear-gradient(#9a9a9a, #808080);
  }

  .toggle {
    box-sizing: border-box;
    width: 22px;
    border-right: 1px solid #7a7a7a;
  }

  .toggle.on {
    background: linear-gradient(#e6f6fb, #8fc7da);
  }

  .filler {
    width: 12px;
    background: #6f6f6f;
  }

  .space {
    width: 30px;
    border-right: 1px solid #7a7a7a;
  }

  .annotation {
    gap: 4px;
    width: 58px;
    border-right: 1px solid #7a7a7a;
  }

  .status-end {
    display: flex;
    align-items: center;
    gap: 4px;
    margin-left: auto;
  }

  .status-end .toggle {
    border-right: 0;
  }

  .watermark {
    position: absolute;
    right: 34px;
    bottom: 17px;
    display: flex;
    align-items: center;
    gap: 5px;
    box-sizing: border-box;
    width: 171px;
    height: 86px;
    padding: 0 5px;
    background: #1f2e5a;
    color: #e8e6e3;
    font-family: "Liberation Sans", "Noto Sans CJK SC", sans-serif;
  }

  .watermark strong,
  .watermark span {
    display: block;
    font-size: 26px;
    line-height: 27px;
    white-space: nowrap;
  }

  .watermark span {
    font-size: 22px;
    line-height: 22px;
  }
</style>
